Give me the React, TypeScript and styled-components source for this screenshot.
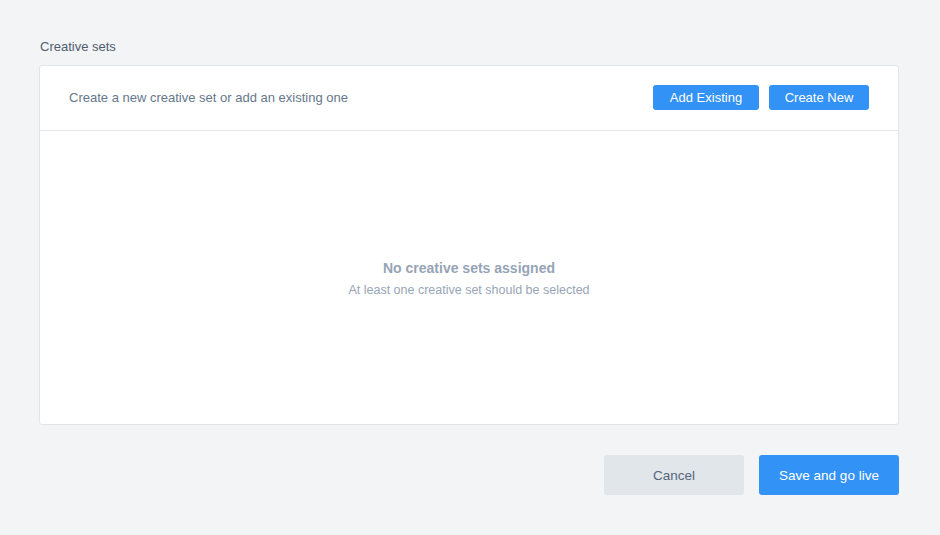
import React from "react";
import styled, { createGlobalStyle } from "styled-components";

const Global = createGlobalStyle`
  html, body { margin: 0; padding: 0; background: #f3f4f6; }
  body { font-family: "Liberation Sans", Arial, sans-serif; -webkit-font-smoothing: antialiased; }
  * { box-sizing: border-box; }
`;

const Page = styled.div`
  width: 860px;
  margin-left: 39px;
  padding-top: 39px;
`;

const SectionLabel = styled.div`
  font-size: 13px;
  line-height: 16px;
  color: #4f5d70;
  margin-bottom: 10px;
  padding-left: 1px;
`;

const Card = styled.div`
  background: #ffffff;
  border: 1px solid #e1e5ea;
  border-radius: 3px;
  height: 360px;
  display: flex;
  flex-direction: column;
`;

const CardHeader = styled.div`
  height: 65px;
  border-bottom: 1px solid #e1e5ea;
  display: flex;
  align-items: center;
  justify-content: space-between;
  padding: 0 29px 0 29px;
  flex-shrink: 0;
`;

const HeaderText = styled.div`
  font-size: 13px;
  color: #66778c;
  margin-top: -1px;
`;

const ButtonRow = styled.div`
  display: flex;
  gap: 10px;
  margin-top: -2px;
`;

const SmallButton = styled.button<{ $w: number }>`
  width: ${(p) => p.$w}px;
  height: 25px;
  border: none;
  border-radius: 3px;
  background: #3292f6;
  color: #ffffff;
  font-family: "Liberation Sans", Arial, sans-serif;
  font-size: 13px;
  padding: 0;
  cursor: pointer;
`;

const EmptyState = styled.div`
  flex: 1;
  display: flex;
  flex-direction: column;
  align-items: center;
  justify-content: center;
  padding-bottom: 0px;
`;

const EmptyTitle = styled.div`
  font-size: 14px;
  font-weight: bold;
  color: #96a4b6;
  letter-spacing: 0px;
  line-height: 18px;
`;

const EmptySub = styled.div`
  font-size: 12.5px;
  color: #98a5b6;
  margin-top: 6px;
  line-height: 14px;
`;

const Footer = styled.div`
  display: flex;
  justify-content: flex-end;
  gap: 15px;
  margin-top: 30px;
`;

const BigButton = styled.button<{ $primary?: boolean }>`
  width: 140px;
  height: 40px;
  border: none;
  border-radius: 3px;
  background: ${(p) => (p.$primary ? "#3292f6" : "#e1e6ea")};
  color: ${(p) => (p.$primary ? "#ffffff" : "#56657a")};
  font-family: "Liberation Sans", Arial, sans-serif;
  font-size: 13.5px;
  padding: 0;
  cursor: pointer;
`;

export default function App() {
  return (
    <>
      <Global />
      <Page>
        <SectionLabel>Creative sets</SectionLabel>
        <Card>
          <CardHeader>
            <HeaderText>Create a new creative set or add an existing one</HeaderText>
            <ButtonRow>
              <SmallButton $w={106}>Add Existing</SmallButton>
              <SmallButton $w={100}>Create New</SmallButton>
            </ButtonRow>
          </CardHeader>
          <EmptyState>
            <EmptyTitle>No creative sets assigned</EmptyTitle>
            <EmptySub>At least one creative set should be selected</EmptySub>
          </EmptyState>
        </Card>
        <Footer>
          <BigButton>Cancel</BigButton>
          <BigButton $primary>Save and go live</BigButton>
        </Footer>
      </Page>
    </>
  );
}
